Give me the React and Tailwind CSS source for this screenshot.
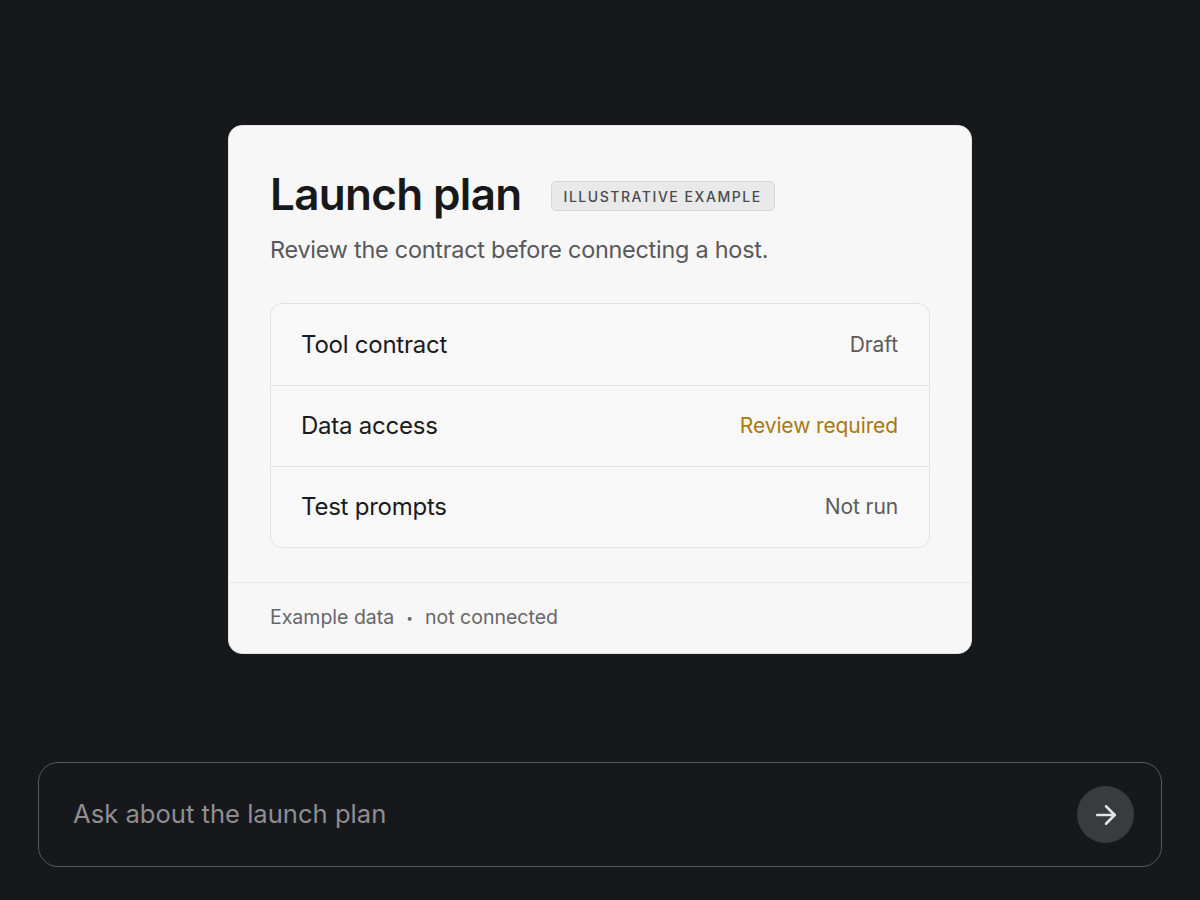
import React from 'react';
import { ArrowRight } from 'lucide-react';

const rows = [
  { label: 'Tool contract', status: 'Draft', tone: 'text-[#5b5b5f]' },
  { label: 'Data access', status: 'Review required', tone: 'text-[#a9780f]' },
  { label: 'Test prompts', status: 'Not run', tone: 'text-[#5b5b5f]' },
];

export default function App() {
  return (
    <div
      className="h-[900px] w-full bg-[#17181c] flex flex-col items-center pt-[125px] pb-[33px] px-[38px]"
      style={{ fontFamily: 'Inter, "Noto Sans", sans-serif' }}
    >
      {/* Plan card */}
      <div className="w-[744px] bg-[#f7f7f7] rounded-[14px] border border-[#e4e4e4] overflow-hidden">
        <div className="px-[41px] pt-[44px] pb-[34px]">
          <div className="flex items-center gap-[29px]">
            <h1 className="text-[44px] leading-[48px] font-semibold tracking-[-0.015em] text-[#18181a]">
              Launch plan
            </h1>
            <span className="mt-[4px] h-[30px] px-[12px] flex items-center rounded-[5px] border border-[#d6d6d6] bg-[#e9e9e9] text-[14px] font-medium tracking-[0.11em] text-[#4a4a4e]">
              ILLUSTRATIVE EXAMPLE
            </span>
          </div>
          <p className="mt-[16px] text-[23.4px] leading-[32px] tracking-[-0.01em] text-[#58585c]">
            Review the contract before connecting a host.
          </p>

          <div className="mt-[37px] rounded-[12px] border border-[#e2e2e2] bg-[#f8f8f8]">
            {rows.map((r, i) => (
              <div
                key={r.label}
                className={`h-[81px] pl-[30px] pr-[31px] flex items-center justify-between ${i > 0 ? 'border-t border-[#e2e2e2]' : ''}`}
              >
                <span className="text-[24px] tracking-[-0.01em] text-[#1a1a1c]">{r.label}</span>
                <span className={`text-[21px] tracking-[-0.005em] ${r.tone}`}>{r.status}</span>
              </div>
            ))}
          </div>
        </div>

        <div className="border-t border-[#e4e4e4] h-[71px] px-[41px] flex items-center text-[19.5px] text-[#66666a]">
          <span>Example data</span>
          <span className="mx-[12px] text-[12px]">•</span>
          <span>not connected</span>
        </div>
      </div>

      {/* Prompt input */}
      <div className="mt-auto w-full h-[105px] rounded-[20px] border border-[#58595e] flex items-center pl-[34px] pr-[27px]">
        <span className="flex-1 text-[25.6px] text-[#8e8e93]">Ask about the launch plan</span>
        <button className="w-[57px] h-[57px] rounded-full bg-[#3a3b3f] flex items-center justify-center">
          <ArrowRight className="w-[30px] h-[30px] text-[#e4e4e6]" strokeWidth={2} />
        </button>
      </div>
    </div>
  );
}
